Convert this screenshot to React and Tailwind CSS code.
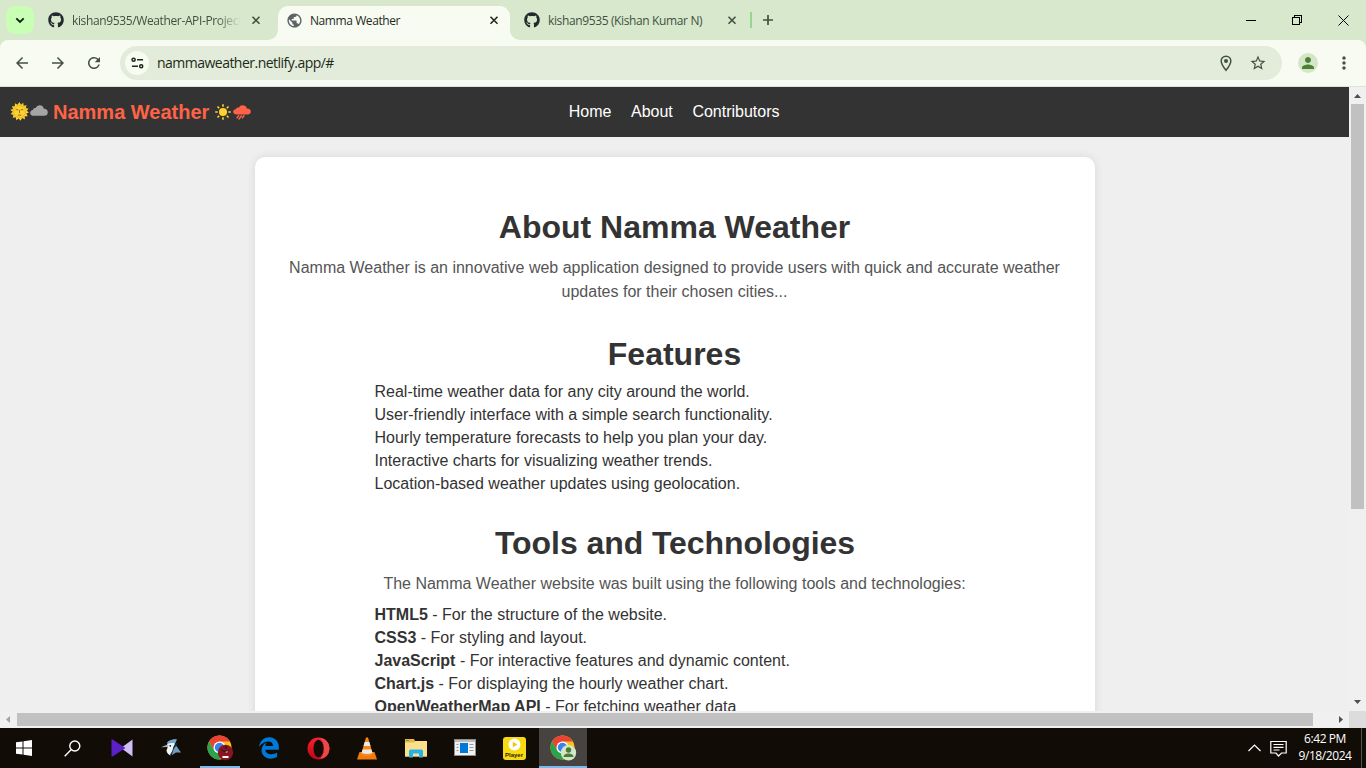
import React from "react";
import { FaGithub, FaEdgeLegacy } from "react-icons/fa6";
import {
  MdArrowBack, MdArrowForward, MdRefresh, MdPublic,
  MdStarOutline, MdPerson, MdMoreVert,
} from "react-icons/md";

const features = [
  "Real-time weather data for any city around the world.",
  "User-friendly interface with a simple search functionality.",
  "Hourly temperature forecasts to help you plan your day.",
  "Interactive charts for visualizing weather trends.",
  "Location-based weather updates using geolocation.",
];

const tools = [
  ["HTML5", "For the structure of the website."],
  ["CSS3", "For styling and layout."],
  ["JavaScript", "For interactive features and dynamic content."],
  ["Chart.js", "For displaying the hourly weather chart."],
  ["OpenWeatherMap API", "For fetching weather data"],
];

function TabFoot({ flip }) {
  return (
    <svg className={flip ? "h-[10px] w-[10px] shrink-0 self-end -scale-x-100" : "h-[10px] w-[10px] shrink-0 self-end"} viewBox="0 0 10 10">
      <path d="M10 0v10H0A10 10 0 0 0 10 0z" fill="#f8fbf1" />
    </svg>
  );
}

function CloseIcon({ className }) {
  return (
    <svg className={className} width="13" height="13" viewBox="0 0 13 13" stroke="currentColor" strokeWidth="1.600">
      <path d="M3.500 2.800l7 7M10.500 2.800l-7 7" />
    </svg>
  );
}

function TabStrip() {
  return (
    <div className="flex h-10 shrink-0 items-stretch bg-[#d7e8cd] text-[12px] text-[#42513f]">
      <div className="ml-1.5 mt-1.5 flex h-7 w-7 items-center justify-center rounded-[9px] bg-[#c8ffb5] text-[#10200d]">
        <svg width="10" height="7" viewBox="0 0 10 7" fill="none" stroke="currentColor" strokeWidth="1.800"><path d="M1.300 1.300L5 5l3.700-3.700" /></svg>
      </div>
      <div className="flex w-[234px] items-center pl-[14px]">
        <FaGithub size={16} color="#24292f" />
        <span className="ml-2 w-[168px] overflow-hidden whitespace-nowrap pt-[2px] tracking-[-0.37px] [mask-image:linear-gradient(to_right,#000_145px,transparent_168px)]">kishan9535/Weather-API-Project</span>
        <CloseIcon className="ml-[9px]" />
      </div>
      <TabFoot />
      <div className="mt-1.5 flex w-[232px] items-center rounded-t-[10px] bg-[#f8fbf1] pb-1.5 pl-2 text-[#1e2a1b]">
        <MdPublic size={17} color="#5f6368" />
        <span className="ml-[7px] w-[176px] whitespace-nowrap pt-[2px] tracking-[-0.42px]">Namma Weather</span>
        <CloseIcon className="ml-[1px]" />
      </div>
      <TabFoot flip />
      <div className="flex w-[230px] items-center pl-1">
        <FaGithub size={16} color="#24292f" />
        <span className="ml-2 w-[176px] whitespace-nowrap pt-[2px] tracking-[-0.37px]">kishan9535 (Kishan Kumar N)</span>
        <CloseIcon className="ml-[1px]" />
      </div>
      <div className="mt-3 h-4 w-[2px] bg-[#9bd48d]" />
      <svg className="ml-[10px] self-center" width="12" height="12" viewBox="0 0 12 12" stroke="currentColor" strokeWidth="1.700"><path d="M6 1v10M1 6h10" /></svg>
      <div className="ml-auto flex items-center gap-[36px] pr-[17px]">
        <svg width="10" height="11" viewBox="0 0 10 11" shapeRendering="crispEdges"><path d="M0 5h10v1H0z" fill="#000" /></svg>
        <svg width="10" height="11" viewBox="0 0 10 11" fill="none" stroke="#000" shapeRendering="crispEdges"><path d="M.5 2.500h7v7h-7zM2.500 2.500v-2h7v7h-2" /></svg>
        <svg width="11" height="11" viewBox="0 0 11 11" stroke="#000"><path d="M.5.500l10 10M10.500.500l-10 10" /></svg>
      </div>
    </div>
  );
}

function Toolbar() {
  return (
    <div className="flex h-[46px] shrink-0 bg-[#d7e8cd]">
      <div className="flex w-full items-center rounded-t-[8px] bg-[#f8fbf1] text-[#42513f]">
        <MdArrowBack size={18} className="ml-[13px]" />
        <MdArrowForward size={18} className="ml-[18px]" />
        <MdRefresh size={18} className="ml-[18px]" />
        <div className="ml-[17px] flex h-[34px] w-[1162px] items-center rounded-full bg-[#e3ecdb]">
          <div className="ml-[5px] flex h-6 w-6 items-center justify-center rounded-full bg-[#f8fbf1]">
            <svg width="13" height="12" viewBox="0 0 14 12" fill="none" stroke="#1e2a1b" strokeWidth="1.6">
              <circle cx="2.800" cy="2.500" r="1.700" /><path d="M6.500 2.500H13M1 9.500h6.500" /><circle cx="11" cy="9.500" r="1.700" />
            </svg>
          </div>
          <span className="ml-2 whitespace-nowrap pb-[1px] text-[14px] tracking-[-0.52px] text-[#1c2a18]">nammaweather.netlify.app/#</span>
          <svg className="ml-auto" width="12" height="17" viewBox="0 0 12 17">
            <path d="M6 1.200c2.700 0 4.800 2 4.800 4.700C10.800 9.200 6 15.300 6 15.300S1.200 9.200 1.200 5.900C1.200 3.200 3.300 1.200 6 1.200z" fill="none" stroke="#42513f" strokeWidth="1.5" />
            <circle cx="6" cy="5.900" r="2" fill="#42513f" />
          </svg>
          <MdStarOutline size={18} className="ml-[17px] mr-[15px]" />
        </div>
        <div className="ml-4 flex h-5 w-5 items-center justify-center rounded-full bg-[#d3e6c8]">
          <MdPerson size={18} color="#4c8034" />
        </div>
        <MdMoreVert size={20} className="ml-4" />
      </div>
    </div>
  );
}

function SunFace() {
  return (
    <svg className="mb-[2px] h-[19px] w-[19px]" viewBox="0 0 20 20">
      <path d="M10 0l1.500 2.800L14 .900l.300 3.100 3.200-.700-1 3 3 .700-1.900 2.300L20 11l-2.800 1.200 1.500 2.800-3.200.100.200 3.200-2.800-1.400L11 19.800l-1.800-2.500-2.600 1.900-.600-3.100-3.200.500.900-3-3-1 2.200-2.300L.3 8.200l3-.900L2 4.500l3.100.1.100-3.200 2.600 1.500z" fill="#ffd12f" />
      <circle cx="10" cy="10" r="6.300" fill="#ffd12f" stroke="#b98f24" strokeWidth=".4" />
      <path d="M6 8.300q1.300-.700 2.800 0M11.200 8.300q1.500-.700 2.800 0M10 8.500v3.200M8.200 13.800h3.600" fill="none" stroke="#7d6320" strokeWidth=".9" />
    </svg>
  );
}

function NavBar() {
  return (
    <nav className="relative flex h-[50px] items-center bg-[#333]">
      <h1 className="ml-[10px] flex items-center text-[20px] font-bold leading-none text-[#ff6347]">
        <SunFace />
        <svg className="mb-[4px] ml-[1px] h-[11px] w-[18px]" viewBox="0 0 18 11">
          <path d="M4 10.800C1.500 10.800.2 9.500.2 7.900c0-1.700 1.200-2.700 2.700-2.900C3.300 3.300 4.500 2.800 5.800 3 6.500 1 8 .2 9.800.2c2.200 0 3.700 1.500 4 3.500C16.200 3.600 17.800 5 17.800 7.200c0 2.300-1.300 3.600-3.500 3.600z" fill="#a5a5a5" />
        </svg>
        <span className="ml-[5px] whitespace-nowrap">Namma Weather</span>
        <svg className="ml-[6px] h-4 w-4" viewBox="0 0 16 16">
          <circle cx="8" cy="8" r="4" fill="#ffd12f" />
          <path d="M8 .2v2.500M8 13.300v2.500M.2 8h2.500M13.300 8h2.500M2.500 2.500l1.700 1.700M11.800 11.800l1.700 1.700M13.500 2.500l-1.700 1.700M4.200 11.800l-1.700 1.700" stroke="#ffd12f" strokeWidth="1.600" />
        </svg>
        <svg className="ml-[2px] h-[15px] w-[18px]" viewBox="0 0 18 15">
          <path d="M3.500 9.500C1.500 9.500.2 8.400.2 6.800c0-1.500 1.100-2.500 2.600-2.600C3.300 3 4.500 2.400 5.800 2.700 6.500 1 8 .2 9.700.2c2.100 0 3.700 1.200 4.100 3.200 2.400-.1 4 1 4 3.100 0 1.800-1.300 3-3.300 3z" fill="#ff6347" />
          <path d="M6 10.300l-2.300 2.900M8.700 10.300l-3 4.200M11.300 10.300l-2.300 3" stroke="#ff6347" strokeWidth="1.400" />
        </svg>
      </h1>
      <div className="absolute left-[568.7px] flex gap-[19.6px] text-[16px] text-white">
        <a>Home</a><a>About</a><a>Contributors</a>
      </div>
    </nav>
  );
}

function Heading({ children }) {
  return <h2 className="text-center text-[32px] font-bold leading-[38px] text-[#333]">{children}</h2>;
}

function PageContent() {
  return (
    <main className="h-[624px] w-[1349px] overflow-hidden bg-[#efefef] font-['Liberation_Sans',Arial,sans-serif]">
      <NavBar />
      <section className="ml-[255px] mt-5 w-[840px] rounded-[10px] bg-white pb-10 pl-[19.5px] pr-[20.5px] pt-[51px] shadow-[0_0_10px_rgba(0,0,0,0.1)]">
        <Heading>About Namma Weather</Heading>
        <p className="mt-[10px] text-center text-[16px] leading-6 text-[#555]">
          Namma Weather is an innovative web application designed to provide users with quick and accurate weather<br />updates for their chosen cities...
        </p>
        <div className="mt-[31px]"><Heading>Features</Heading></div>
        <ul className="ml-[100px] mt-[7px] text-[16px] leading-[23px] text-[#333]">
          {features.map((f) => <li key={f}>{f}</li>)}
        </ul>
        <div className="ml-px mt-[29px] tracking-[-0.07px]"><Heading>Tools and Technologies</Heading></div>
        <p className="mt-[10px] text-center text-[16px] leading-6 text-[#555]">The Namma Weather website was built using the following tools and technologies:</p>
        <ul className="ml-[100px] mt-[7px] text-[16px] leading-[23px] text-[#333]">
          {tools.map(([name, use]) => <li key={name}><strong>{name}</strong> - {use}</li>)}
        </ul>
      </section>
    </main>
  );
}

function VerticalScroll() {
  return (
    <div className="flex h-[624px] w-[17px] flex-col items-center bg-[#f0f0f0]">
      <svg width="17" height="17" viewBox="0 0 17 17"><path d="M5 11l3.500-4 3.500 4z" fill="#505050" /></svg>
      <div className="h-[405px] w-[13px] bg-[#c1c1c1]" />
      <svg className="mt-auto" width="17" height="17" viewBox="0 0 17 17"><path d="M5 6l3.500 4L12 6z" fill="#505050" /></svg>
    </div>
  );
}

function HorizontalScroll() {
  return (
    <div className="flex h-[17px] shrink-0 bg-[#f0f0f0]">
      <svg width="17" height="17" viewBox="0 0 17 17"><path d="M10 5L6 8.500l4 3.500z" fill="#a3a3a3" /></svg>
      <div className="mt-[2px] h-[13px] w-[1296px] bg-[#c1c1c1]" />
      <svg className="ml-[19px]" width="17" height="17" viewBox="0 0 17 17"><path d="M7 5l4 3.500L7 12z" fill="#505050" /></svg>
      <div className="w-[17px] bg-[#dcdcdc]" />
    </div>
  );
}

function Chrome({ children }) {
  return (
    <svg width="28" height="28" viewBox="0 0 28 28">
      <circle cx="12.500" cy="12.500" r="12" fill="#fbc116" />
      <path d="M2.100 6.500A12 12 0 0 1 22.900 6.500H12.500L7.300 15.500z" fill="#ea4335" />
      <path d="M2.100 6.500L7.300 15.500 12.500 18.500 17.700 15.500 12.500 24.500A12 12 0 0 1 2.100 6.500z" fill="#2ba24c" />
      <circle cx="12.500" cy="12.500" r="6" fill="#fff" /><circle cx="12.500" cy="12.500" r="4.700" fill="#3b82ea" />
      {children}
    </svg>
  );
}

function TaskItem({ children, active, current }) {
  return (
    <div className={current ? "flex h-10 w-12 flex-col bg-[#474341]" : "flex h-10 w-12 flex-col"}>
      <div className="flex h-[38px] items-center justify-center pt-[2px]">{children}</div>
      {active ? <div className={current ? "h-[2px] w-12 bg-[#76b9ed]" : "mx-auto h-[2px] w-10 bg-[#76b9ed]"} /> : null}
    </div>
  );
}

function TaskBar() {
  return (
    <footer className="flex h-10 shrink-0 bg-[#120c07] text-white">
      <div className="flex gap-[1px]">
        <TaskItem><svg width="16" height="16" viewBox="0 0 16 16" fill="#fff"><path d="M0 2.300L6.500 1.400v6.100H0zM7.500 1.200L16 0v7.500H7.500zM0 8.500h6.500v6.100L0 13.700zM7.500 8.500H16V16l-8.500-1.200z" /></svg></TaskItem>
        <TaskItem><svg className="mr-[2px]" width="17" height="17" viewBox="0 0 17 17" fill="none" stroke="#fff" strokeWidth="1.400"><circle cx="10.800" cy="6" r="5" /><path d="M7.300 9.500L.7 16.300" /></svg></TaskItem>
        <TaskItem><svg width="22" height="18" viewBox="0 0 22 18"><path d="M21.500 .5v17L10 9z" fill="#cfbdf5" /><path d="M1.500 .5Q.5 0 .5 1.200v15.600Q.5 18 1.500 17.500L14.500 9z" fill="#5b21c4" /></svg></TaskItem>
        <TaskItem>
          <svg className="mb-[1px]" width="20" height="17" viewBox="0 0 20 17">
            <path d="M6 3.500Q9 0 15.500 .500L14 5 20 13.500H15L11 16z" fill="#6d9cc2" />
            <path d="M6 5Q9 3.500 13.500 4l-1 6-3 6.500Q5.500 14.500 5.500 11l1-2z" fill="#f2f4f6" />
            <path d="M0 8.300L6.500 5.500 8 6.500 6 8z" fill="#aab3bc" />
            <path d="M15.500 3.500l1 1.500-3.500 4.500-2.500 7-1.500-.700Q12 12 12.500 7.500z" fill="#1d252d" />
            <path d="M6 4Q10-.300 16 .500L14 4Q10 2.500 6 4z" fill="#79a9cc" /><circle cx="9.300" cy="6.800" r=".9" fill="#17202b" />
          </svg>
        </TaskItem>
        <TaskItem active>
          <div className="ml-[2px] mt-[1px]"><Chrome>
            <circle cx="18.500" cy="17.500" r="7.700" fill="#8c1420" /><path d="M13 14l6 2 4-2-3 4-3-1zM18 11h2v3h-2z" fill="#35181c" /><path d="M15.500 21h6v2h-6z" fill="#fff" /><path d="M18 17l3-1-1 2z" fill="#d5b7b7" />
          </Chrome></div>
        </TaskItem>
        <TaskItem><FaEdgeLegacy size={22} color="#0078d7" /></TaskItem>
        <TaskItem>
          <svg width="23" height="23" viewBox="0 0 23 23"><defs><linearGradient id="opera" x2="0" y2="1"><stop stopColor="#ff202e" /><stop offset="1" stopColor="#b80717" /></linearGradient></defs>
            <circle cx="11.500" cy="11.500" r="11" fill="url(#opera)" /><path d="M11.500 1Q22 1 22.500 11.500 22 22 11.500 22 17 20 17 11.500T11.500 1z" fill="#e84a4c" /><ellipse cx="11.500" cy="11.500" rx="5" ry="8.800" fill="#120c07" /></svg>
        </TaskItem>
        <TaskItem>
          <svg width="20" height="23" viewBox="0 0 20 23"><path d="M2.500 15h15L20 22.500H0z" fill="#f27a0c" /><path d="M9 .5h2l5 17q-6 3-12 0z" fill="#f58a1b" /><path d="M7.700 5h4.600l1.200 4h-7zM5.600 12.500h8.800l1 3.500q-5.400 2-10.800 0z" fill="#e9e9e9" /></svg>
        </TaskItem>
        <TaskItem>
          <svg width="22" height="19" viewBox="0 0 22 19"><path d="M0 0h9l1 2h12v15.500H0z" fill="#e8b64b" /><path d="M0 3.500h9L10.500 2H22v15.500H0z" fill="#fbe08c" /><path d="M1 1h3v1H1z" fill="#52a35b" /><path d="M4 18.500V12q0-1.500 1.500-1.500h11Q18 10.500 18 12v6.500h-4v-4H8v4z" fill="#25b1ea" /></svg>
        </TaskItem>
        <TaskItem>
          <svg className="mb-[1px]" width="22" height="17" viewBox="0 0 22 17"><path d="M0 0h22v17H0z" fill="#8d8d8d" /><path d="M1 1h20v15H1z" fill="#f1f1f1" /><path d="M1 1h20v2H1z" fill="#bdbdbd" /><path d="M6 4h8v10H6z" fill="#0078d7" /><path d="M2.500 5.500h2m-2 3h2m-2 3h2m11-6h4m-4 3h4m-4 3h4" stroke="#999" /></svg>
        </TaskItem>
        <TaskItem>
          <div className="flex h-[23px] w-[23px] flex-col items-center rounded-[3px] bg-[#f8da12]">
            <svg width="13" height="13" viewBox="0 0 13 13" className="mt-[1px] shrink-0"><circle cx="6.500" cy="6.500" r="6" fill="#fff" /><path d="M4.800 3.800L9.500 6.500 4.800 9.200z" fill="#f1c60b" /></svg>
            <span className="font-['Liberation_Sans',sans-serif] text-[6px] font-bold leading-[8px] text-[#2b2600]">Player</span>
          </div>
        </TaskItem>
        <TaskItem active current>
          <div className="ml-[2px] mt-[1px]"><Chrome>
            <circle cx="18.500" cy="17.800" r="7.700" fill="#d3e6c8" /><circle cx="18.500" cy="15" r="2.700" fill="#4c7a38" /><path d="M13.500 22q0-3.500 5-3.500t5 3.500z" fill="#4c7a38" />
          </Chrome></div>
        </TaskItem>
      </div>
      <div className="ml-auto flex items-center">
        <svg width="13" height="8" viewBox="0 0 13 8" fill="none" stroke="#fff" strokeWidth="1.200"><path d="M.5 7l6-6 6 6" /></svg>
        <svg className="ml-[9px]" width="17" height="17" viewBox="0 0 17 17" fill="none" stroke="#fff" strokeWidth="1.200"><path d="M.8 1.500h15.400v11.500h-4.700L8.500 16 6 13H.8zM3.500 4.500h10M3.500 7.300h10M3.500 10h6" /></svg>
        <div className="ml-[11px] w-[54px] whitespace-nowrap pb-[2px] text-center text-[12px] leading-[17px] tracking-[-0.42px]"><div>6:42 PM</div><div>9/18/2024</div></div>
        <div className="ml-[9px] h-10 w-[1px] bg-[#55524f]" />
        <div className="w-[4px]" />
      </div>
    </footer>
  );
}

export default function App() {
  return (
    <div className="flex h-[768px] w-[1366px] flex-col overflow-hidden bg-white font-['Open_Sans','Noto_Sans',sans-serif]">
      <TabStrip />
      <Toolbar />
      <div className="h-px shrink-0 bg-[#dfe3d3]" />
      <div className="flex h-[624px] shrink-0"><PageContent /><VerticalScroll /></div>
      <HorizontalScroll />
      <TaskBar />
    </div>
  );
}
